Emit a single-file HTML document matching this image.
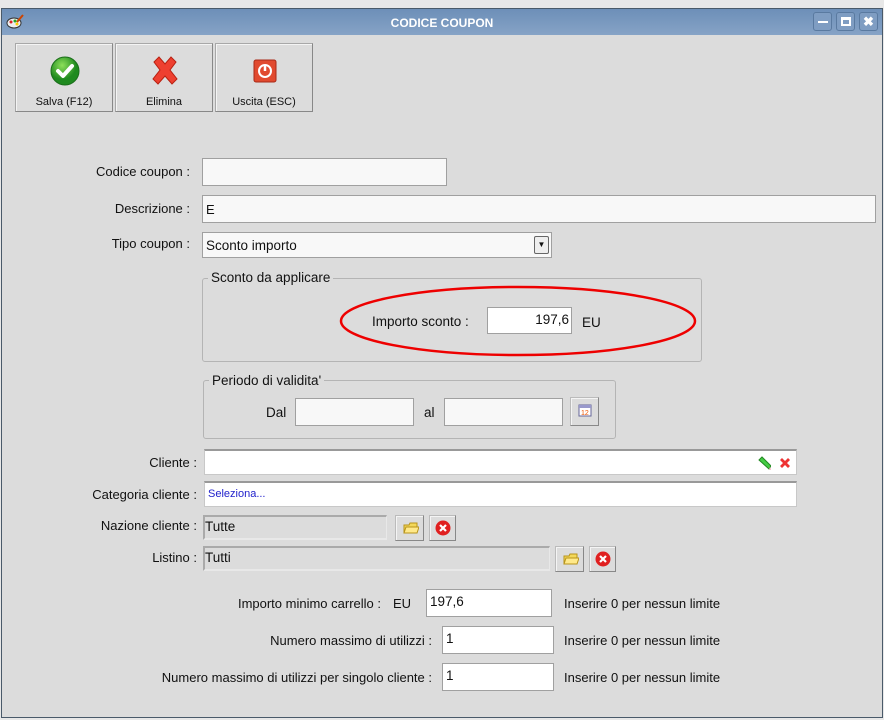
<!DOCTYPE html>
<html><head><meta charset="utf-8"><style>
*{margin:0;padding:0;box-sizing:border-box}
body{width:884px;height:720px;overflow:hidden;background:#e8e8e8;font-family:"Liberation Sans",sans-serif;font-size:13px;color:#111;position:relative}
.a{position:absolute}
.win{left:1px;top:8px;width:882px;height:710px;background:#dcdcdc;border:1px solid #4a5a6a;border-top:none}
.title{left:1px;top:8px;width:882px;height:27px;background:linear-gradient(#6d8fb8,#86a3c6);border:1px solid #4a5a6a;border-bottom:none}
.tt{left:0;width:884px;top:16px;text-align:center;color:#fff;font-weight:bold;font-size:12px}
.wb{top:12px;width:19px;height:19px;border:1px solid #5a7aa0;border-radius:3px;background:#7f9dc2}
.tb{top:43px;width:98px;height:69px;background:#dcdcdc;border:1px solid #a8a8a8;border-right-color:#888;border-bottom-color:#888;box-shadow:inset 1px 1px 0 #f4f4f4}
.tb span{position:absolute;left:0;right:0;top:52px;text-align:center;font-size:11px}
.lbl{text-align:right}
.in{background:#f8f8f8;border:1px solid #a0a0a0}
.wh{background:#fff;border:1px solid #c8c8c8;border-top:2px solid #999}
.dis{background:#dcdcdc;border:2px solid #aaa;border-right-color:#e8e8e8;border-bottom-color:#e8e8e8;border-width:2px 1px 2px 2px}
.grp{border:1px solid #b4b4b4;border-radius:3px}
.lg{background:#dcdcdc;padding:0 3px;font-size:13.5px}
.sb{width:29px;height:26px;background:#dcdcdc;border:1px solid #bbb;border-right-color:#888;border-bottom-color:#888;box-shadow:inset 1px 1px 0 #f4f4f4}
</style></head><body>
<div class="a win"></div>
<div class="a title"></div>
<div class="a tt">CODICE COUPON</div>
<svg class="a" style="left:6px;top:14px" width="18" height="16"><ellipse cx="8" cy="9" rx="7" ry="5" fill="#eee" stroke="#333"/><circle cx="5" cy="8" r="1.5" fill="#d22"/><circle cx="9" cy="7" r="1.5" fill="#2a2"/><circle cx="11" cy="10" r="1.5" fill="#fc0"/><line x1="11" y1="8" x2="17" y2="1" stroke="#c40" stroke-width="2"/></svg>
<div class="a wb" style="left:813px"><div class="a" style="left:4px;top:8px;width:10px;height:2px;background:#fff"></div></div>
<div class="a wb" style="left:836px"><div class="a" style="left:4px;top:4px;width:10px;height:9px;border:2px solid #fff;border-top-width:3px"></div></div>
<div class="a wb" style="left:859px;color:#fff;font-weight:bold;font-size:13px;text-align:center;line-height:17px">✖</div>

<div class="a tb" style="left:15px"><svg class="a" style="left:34px;top:12px" width="30" height="30"><defs><radialGradient id="g" cx="40%" cy="30%"><stop offset="0" stop-color="#8de05a"/><stop offset="1" stop-color="#1f8a1f"/></radialGradient></defs><circle cx="15" cy="15" r="14" fill="url(#g)" stroke="#1a6e1a"/><path d="M8 15l5 5 9-10" stroke="#fff" stroke-width="4" fill="none" stroke-linecap="round" stroke-linejoin="round"/></svg><span>Salva (F12)</span></div>
<div class="a tb" style="left:115px"><svg class="a" style="left:34px;top:11px" width="30" height="32"><path d="M4 7l5-5 6 7 6-7 5 5-6 8 7 9-5 5-7-8-7 8-5-5 7-9z" fill="#ee4030" stroke="#b82010"/></svg><span>Elimina</span></div>
<div class="a tb" style="left:215px"><svg class="a" style="left:37px;top:15px" width="24" height="24"><rect x="1" y="1" width="22" height="22" rx="2" fill="#e14a2f" stroke="#a82a18"/><circle cx="12" cy="12" r="6" fill="none" stroke="#fff" stroke-width="2"/><line x1="12" y1="6" x2="12" y2="12" stroke="#fff" stroke-width="2.5"/></svg><span>Uscita (ESC)</span></div>

<div class="a lbl" style="right:694px;top:164px">Codice coupon :</div>
<div class="a in" style="left:202px;top:158px;width:245px;height:28px"></div>
<div class="a lbl" style="right:694px;top:201px">Descrizione :</div>
<div class="a in" style="left:202px;top:195px;width:674px;height:28px"><span class="a" style="left:3px;top:6px">E</span></div>
<div class="a lbl" style="right:694px;top:236px">Tipo coupon :</div>
<div class="a in" style="left:202px;top:232px;width:350px;height:26px"><span class="a" style="left:3px;top:5px;font-size:13.5px">Sconto importo</span><div class="a" style="left:331px;top:3px;width:15px;height:18px;border:1px solid #666;border-radius:2px;background:#eee;font-size:8px;text-align:center;line-height:16px">▼</div></div>

<div class="a grp" style="left:202px;top:278px;width:500px;height:84px"></div>
<div class="a lg" style="left:208px;top:270px">Sconto da applicare</div>
<div class="a" style="left:372px;top:314px;font-size:13.5px">Importo sconto :</div>
<div class="a in" style="left:487px;top:307px;width:85px;height:27px;background:#fff"><span class="a" style="right:2px;top:4px;font-size:13.5px">197,6</span></div>
<div class="a" style="left:582px;top:315px;font-size:13.5px">EU</div>

<div class="a grp" style="left:203px;top:380px;width:413px;height:59px"></div>
<div class="a lg" style="left:209px;top:373px">Periodo di validita'</div>
<div class="a" style="left:266px;top:405px;font-size:13.5px">Dal</div>
<div class="a in" style="left:295px;top:398px;width:119px;height:28px"></div>
<div class="a" style="left:424px;top:405px;font-size:13.5px">al</div>
<div class="a in" style="left:444px;top:398px;width:119px;height:28px"></div>
<div class="a sb" style="left:570px;top:397px;height:29px"><svg class="a" style="left:7px;top:5px" width="14" height="14"><rect x="1" y="2" width="12" height="11" fill="#fff" stroke="#669"/><rect x="1" y="2" width="12" height="3" fill="#99c"/><text x="3" y="12" font-size="7" fill="#e50" font-family="Liberation Sans">12</text></svg></div>

<div class="a lbl" style="right:687px;top:455px">Cliente :</div>
<div class="a wh" style="left:204px;top:449px;width:593px;height:26px"><svg class="a" style="left:552px;top:5px" width="14" height="14"><path d="M2 4l3-3 9 9-2 3z" fill="#4c4" stroke="#282"/><path d="M12 13l2 1-1-3" fill="#e9a"/></svg><svg class="a" style="left:574px;top:6px" width="12" height="12"><path d="M1 3l2-2 3 3 3-3 2 2-3 3 3 3-2 2-3-3-3 3-2-2 3-3z" fill="#e33"/></svg></div>
<div class="a lbl" style="right:687px;top:487px">Categoria cliente :</div>
<div class="a wh" style="left:204px;top:481px;width:593px;height:26px"><span class="a" style="left:3px;top:5px;font-size:11px;color:#22c">Seleziona...</span></div>
<div class="a lbl" style="right:687px;top:518px">Nazione cliente :</div>
<div class="a dis" style="left:203px;top:515px;width:184px;height:25px"><span class="a" style="left:0;top:2px;font-size:13.5px">Tutte</span></div>
<div class="a sb" style="left:395px;top:515px"><svg class="a" style="left:7px;top:5px" width="16" height="14"><path d="M1 4h5l1-2h7v10H1z" fill="#f3d85a" stroke="#b8941a"/><path d="M1 12l2-6h13l-2 6z" fill="#ffe98a" stroke="#b8941a"/></svg></div>
<div class="a sb" style="left:429px;top:515px;width:27px"><svg class="a" style="left:5px;top:4px" width="16" height="16"><circle cx="8" cy="8" r="7.5" fill="#e02020"/><path d="M5 5l6 6M11 5l-6 6" stroke="#fff" stroke-width="2.2"/></svg></div>
<div class="a lbl" style="right:687px;top:550px">Listino :</div>
<div class="a dis" style="left:203px;top:546px;width:347px;height:25px"><span class="a" style="left:0;top:2px;font-size:13.5px">Tutti</span></div>
<div class="a sb" style="left:555px;top:546px"><svg class="a" style="left:7px;top:5px" width="16" height="14"><path d="M1 4h5l1-2h7v10H1z" fill="#f3d85a" stroke="#b8941a"/><path d="M1 12l2-6h13l-2 6z" fill="#ffe98a" stroke="#b8941a"/></svg></div>
<div class="a sb" style="left:589px;top:546px;width:27px"><svg class="a" style="left:5px;top:4px" width="16" height="16"><circle cx="8" cy="8" r="7.5" fill="#e02020"/><path d="M5 5l6 6M11 5l-6 6" stroke="#fff" stroke-width="2.2"/></svg></div>

<div class="a lbl" style="right:503px;top:596px">Importo minimo carrello :</div>
<div class="a" style="left:393px;top:596px">EU</div>
<div class="a in" style="left:426px;top:589px;width:126px;height:28px;background:#fff"><span class="a" style="left:3px;top:4px;font-size:13.5px">197,6</span></div>
<div class="a" style="left:564px;top:596px">Inserire 0 per nessun limite</div>
<div class="a lbl" style="right:452px;top:633px">Numero massimo di utilizzi :</div>
<div class="a in" style="left:442px;top:626px;width:112px;height:28px;background:#fff"><span class="a" style="left:3px;top:4px;font-size:13.5px">1</span></div>
<div class="a" style="left:564px;top:633px">Inserire 0 per nessun limite</div>
<div class="a lbl" style="right:452px;top:670px">Numero massimo di utilizzi per singolo cliente :</div>
<div class="a in" style="left:442px;top:663px;width:112px;height:28px;background:#fff"><span class="a" style="left:3px;top:4px;font-size:13.5px">1</span></div>
<div class="a" style="left:564px;top:670px">Inserire 0 per nessun limite</div>

<svg class="a" style="left:0;top:0" width="884" height="720"><ellipse cx="518" cy="321" rx="177" ry="34" fill="none" stroke="#e00" stroke-width="2.5"/></svg>
</body></html>
